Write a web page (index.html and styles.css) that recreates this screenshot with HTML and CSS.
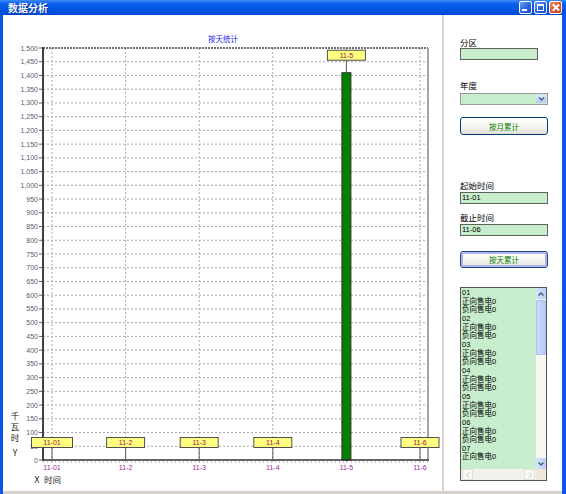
FILE: index.html
```html
<!DOCTYPE html>
<html lang="zh-CN">
<head>
    <meta charset="UTF-8">
    <title>数据分析</title>
    <link rel="stylesheet" href="styles.css">
</head>
<body>
    <div class="window">
        <div class="titlebar">
            <span class="title">数据分析</span>
            <div class="controls">
                <span class="tb min"></span>
                <span class="tb max"></span>
                <span class="tb close"></span>
            </div>
        </div>

        <div class="content">
            <div class="chart">
                <svg id="chart" width="439" height="476" viewBox="3 15 439 476"></svg>
            </div>

            <div class="side">
                <label class="field-label">分区</label>
                <div class="textbox short"></div>

                <label class="field-label gap-year">年度</label>
                <div class="combo">
                    <span class="combo-btn">
                        <svg width="9" height="8" viewBox="0 0 9 8"><path d="M2 2.5 L4.5 5 L7 2.5" fill="none" stroke="#4d6185" stroke-width="1.5"/></svg>
                    </span>
                </div>

                <button class="btn btn-month">按月累计</button>

                <label class="field-label gap-start">起始时间</label>
                <div class="textbox">11-01</div>

                <label class="field-label gap-end">截止时间</label>
                <div class="textbox">11-06</div>

                <button class="btn btn-day">按天累计</button>

                <div class="list">
                    <div class="items" id="items"></div>
                    <div class="vscroll">
                        <span class="sb-btn"><svg width="8" height="6" viewBox="0 0 8 6"><path d="M1.5 4.5 L4 2 L6.5 4.5" fill="none" stroke="#4d6185" stroke-width="1.5"/></svg></span>
                        <span class="sb-track"><span class="sb-thumb"></span></span>
                        <span class="sb-btn"><svg width="8" height="6" viewBox="0 0 8 6"><path d="M1.5 1.5 L4 4 L6.5 1.5" fill="none" stroke="#4d6185" stroke-width="1.5"/></svg></span>
                    </div>
                    <div class="hscroll">
                        <span class="hs-btn"><svg width="6" height="8" viewBox="0 0 6 8"><path d="M4 1.5 L1.5 4 L4 6.5" fill="none" stroke="#c4c4bc" stroke-width="1"/></svg></span>
                        <span class="hs-btn"><svg width="6" height="8" viewBox="0 0 6 8"><path d="M2 1.5 L4.5 4 L2 6.5" fill="none" stroke="#c4c4bc" stroke-width="1"/></svg></span>
                    </div>
                    <div class="corner"></div>
                </div>
            </div>
        </div>
    </div>

    <script>
        const days = ['11-01', '11-2', '11-3', '11-4', '11-5', '11-6'];
        const values = [0, 0, 0, 0, 1410, 0];
        const plot = { left: 43, right: 428, top: 48, bottom: 460, max: 1500 };
        const svg = document.getElementById('chart');
        const NS = 'http://www.w3.org/2000/svg';

        function add(tag, attrs, text) {
            const el = document.createElementNS(NS, tag);
            for (const k in attrs) el.setAttribute(k, attrs[k]);
            if (text !== undefined) el.textContent = text;
            svg.appendChild(el);
            return el;
        }

        function yOf(v) {
            return plot.bottom - v * (plot.bottom - plot.top) / plot.max;
        }

        function xOf(i) {
            return 52 + i * 73.6;
        }

        function fmt(v) {
            if (v < 1000) return String(v);
            return Math.floor(v / 1000) + ',' + String(v % 1000).padStart(3, '0');
        }

        // title
        add('text', { x: 223, y: 42, class: 'chart-title' }, '按天统计');

        // horizontal grid + y labels
        for (let v = 0; v <= plot.max; v += 50) {
            const y = yOf(v);
            if (v > 0 && v < plot.max) {
                add('line', { x1: plot.left, y1: y, x2: plot.right, y2: y, class: 'grid' });
            }
            add('line', { x1: 39, y1: y, x2: plot.left, y2: y, class: 'tick' });
            add('text', { x: 38, y: y + 2.5, class: 'ylabel' }, fmt(v));
        }

        // vertical grid + x labels
        days.forEach((d, i) => {
            const x = xOf(i);
            add('line', { x1: x, y1: plot.top, x2: x, y2: plot.bottom + 4, class: 'grid' });
            add('text', { x: x, y: 470, class: 'xlabel' }, d);
        });

        // bars
        values.forEach((v, i) => {
            if (v <= 0) return;
            const y = yOf(v);
            add('rect', { x: xOf(i) - 4.5, y: y, width: 9, height: plot.bottom - y, class: 'bar' });
        });

        // frame
        add('line', { x1: plot.left, y1: plot.top, x2: plot.right, y2: plot.top, class: 'frame-top' });
        add('line', { x1: plot.right, y1: plot.top, x2: plot.right, y2: plot.bottom, class: 'frame-right' });
        add('line', { x1: plot.left, y1: plot.bottom + 2, x2: plot.right, y2: plot.bottom + 2, class: 'minor' });
        add('line', { x1: plot.left, y1: plot.bottom, x2: plot.right + 1, y2: plot.bottom, class: 'axis-x' });
        add('line', { x1: plot.left, y1: plot.top - 1, x2: plot.left, y2: plot.bottom + 1, class: 'axis-y' });

        // value labels
        values.forEach((v, i) => {
            const x = xOf(i);
            const py = v > 0 ? yOf(v) : plot.bottom;
            const boxBottom = py - 12.5;
            add('line', { x1: x, y1: boxBottom, x2: x, y2: py, class: 'pointer' });
            const box = add('rect', { x: x, y: boxBottom - 10, width: 0, height: 10, class: 'tag' });
            const t = add('text', { x: x, y: boxBottom - 2.5, class: 'tag-text' }, days[i]);
            const w = Math.round(t.getComputedTextLength()) + 24;
            box.setAttribute('x', x - w / 2);
            box.setAttribute('width', w);
        });

        // axis titles
        ['千', '瓦', '时'].forEach((c, i) => {
            add('text', { x: 15, y: 419 + i * 11, class: 'axis-title' }, c);
        });
        add('text', { x: 15, y: 456, class: 'axis-title' }, 'Y');
        add('text', { x: 37, y: 483, class: 'axis-title' }, 'X');
        add('text', { x: 44, y: 483, class: 'axis-title start' }, '时间');

        // list box: only whole rows are shown, like a Win32 listbox
        const items = document.getElementById('items');
        const rows = [];
        for (let n = 1; n <= 7; n++) {
            rows.push('0' + n, '正向售电0', '负向售电0');
        }
        rows.slice(0, 20).forEach(line => {
            const row = document.createElement('div');
            row.className = 'item';
            row.textContent = line;
            items.appendChild(row);
        });
    </script>
</body>
</html>
```

FILE: styles.css
```css
body {
    margin: 0;
    font-family: "Noto Sans CJK SC", "Liberation Sans", sans-serif;
    background: #fff;
}

.window {
    width: 566px;
    height: 494px;
    display: flex;
    flex-direction: column;
    background: #0b55e6;
    overflow: hidden;
}

.titlebar {
    height: 15px;
    display: flex;
    align-items: center;
    justify-content: space-between;
    padding: 0 4px 0 8px;
    background: linear-gradient(to bottom, #3d8cf7 0%, #0b5fe9 25%, #0055e5 65%, #0049d3 100%);
}

.title {
    color: #fff;
    font-size: 10px;
    font-weight: bold;
    line-height: 15px;
    text-shadow: 1px 1px 0 #0a2f9a;
}

.controls {
    display: flex;
    gap: 2px;
}

.tb {
    position: relative;
    width: 13px;
    height: 13px;
    box-sizing: border-box;
    border: 1px solid #fff;
    border-radius: 2px;
    background: linear-gradient(135deg, #6e9cf7 0%, #2a62e0 55%, #1a4fd0 100%);
}

.min::after {
    content: '';
    position: absolute;
    left: 2px;
    bottom: 2px;
    width: 5px;
    height: 2px;
    background: #fff;
}

.max::after {
    content: '';
    position: absolute;
    left: 2px;
    top: 2px;
    width: 7px;
    height: 7px;
    box-sizing: border-box;
    border: 1px solid #fff;
    border-top-width: 2px;
}

.close {
    background: linear-gradient(135deg, #f09070 0%, #e0542e 55%, #c8401a 100%);
}

.close::before,
.close::after {
    content: '';
    position: absolute;
    left: 5px;
    top: 1px;
    width: 1.6px;
    height: 9px;
    background: #fff;
    transform: rotate(45deg);
}

.close::after {
    transform: rotate(-45deg);
}

.content {
    flex: 1;
    display: flex;
    margin: 0 4px 0 3px;
    background: #fff;
    border-bottom: 3px solid #d6d3ce;
}

.chart {
    width: 439px;
    border-right: 2px solid #d6d3ce;
}

.chart svg {
    display: block;
}

/* chart parts */
.chart-title {
    font-size: 7.5px;
    fill: #1c1cf0;
    text-anchor: middle;
}

.grid {
    stroke: #a8a8a8;
    stroke-width: 1;
    stroke-dasharray: 2 2;
}

.tick {
    stroke: #606060;
    stroke-width: 1;
}

.ylabel {
    font-family: "Liberation Sans", sans-serif;
    font-size: 7px;
    fill: #5c5a78;
    text-anchor: end;
}

.xlabel {
    font-family: "Liberation Sans", sans-serif;
    font-size: 7px;
    fill: #9a2a9a;
    text-anchor: middle;
}

.bar {
    fill: #008000;
    stroke: #303030;
    stroke-width: 1;
}

.frame-top {
    stroke: #404040;
    stroke-width: 1.5;
    stroke-dasharray: 2 1;
}

.frame-right {
    stroke: #8a8a8a;
    stroke-width: 1.5;
}

.minor {
    stroke: #909090;
    stroke-width: 1;
    stroke-dasharray: 1 3;
}

.axis-x {
    stroke: #303030;
    stroke-width: 1.5;
}

.axis-y {
    stroke: #404040;
    stroke-width: 2;
}

.pointer {
    stroke: #606060;
    stroke-width: 1;
}

.tag {
    fill: #ffff80;
    stroke: #505050;
    stroke-width: 1;
}

.tag-text {
    font-family: "Liberation Sans", sans-serif;
    font-size: 7px;
    fill: #a01040;
    text-anchor: middle;
}

.axis-title {
    font-size: 8.5px;
    fill: #202020;
    text-anchor: middle;
}

.axis-title.start {
    text-anchor: start;
}

/* side panel */
.side {
    flex: 1;
    display: flex;
    flex-direction: column;
    align-items: flex-start;
    padding: 21px 0 0 16px;
}

.field-label {
    display: block;
    height: 12px;
    line-height: 12px;
    font-size: 8.5px;
    color: #000;
}

.gap-year {
    margin-top: 19px;
}

.gap-start {
    margin-top: 44px;
}

.gap-end {
    margin-top: 7px;
}

.textbox {
    width: 88px;
    height: 12px;
    box-sizing: border-box;
    margin-top: 1px;
    padding-left: 1px;
    border: 1px solid #606060;
    background: #c7edcc;
    font-family: "Liberation Sans", sans-serif;
    font-size: 7.5px;
    line-height: 10px;
    color: #000;
}

.textbox.short {
    width: 78px;
    margin-top: 0;
}

.combo {
    width: 88px;
    height: 12px;
    box-sizing: border-box;
    margin-top: 2px;
    border: 1px solid #9a9a9a;
    background: #c7edcc;
    display: flex;
    justify-content: flex-end;
    padding: 1px;
}

.combo-btn {
    width: 10px;
    height: 8px;
    border-radius: 1px;
    background: linear-gradient(#dbe5fb, #b4c8f6);
    display: flex;
    align-items: center;
    justify-content: center;
}

.btn {
    width: 88px;
    height: 18px;
    padding: 0;
    border: 1px solid #003c74;
    border-radius: 3px;
    background: linear-gradient(#ffffff 0%, #f4f3ee 60%, #e2dfd6 100%);
    font-family: "Noto Sans CJK SC", sans-serif;
    font-size: 7.5px;
    color: #008000;
}

.btn-month {
    margin-top: 12px;
}

.btn-day {
    margin-top: 15px;
    height: 17px;
    border-color: #2a3f8a;
    box-shadow: inset 0 0 0 2px #aab6e8;
}

.list {
    margin-top: 19px;
    width: 87px;
    height: 194px;
    box-sizing: border-box;
    border: 1px solid #555;
    display: grid;
    grid-template-columns: 1fr 10px;
    grid-template-rows: 1fr 11px;
    background: #c7edcc;
}

.items {
    overflow: hidden;
    padding: 1px 0 0 1px;
}

.item {
    height: 8.67px;
    line-height: 8.67px;
    font-family: "Liberation Sans", "Noto Sans CJK SC", sans-serif;
    font-size: 7.5px;
    color: #000;
    white-space: nowrap;
}

.vscroll {
    display: flex;
    flex-direction: column;
    background: #f7f7f3;
}

.sb-btn {
    height: 11px;
    border-radius: 1px;
    background: linear-gradient(to right, #d6e2fc, #b9cdf7);
    display: flex;
    align-items: center;
    justify-content: center;
}

.sb-track {
    flex: 1;
    padding-top: 1px;
}

.sb-thumb {
    display: block;
    height: 55px;
    box-sizing: border-box;
    border: 1px solid #a8bff0;
    border-radius: 1px;
    background: linear-gradient(to right, #cbdafc, #b6cbf7);
}

.hscroll {
    display: flex;
    justify-content: space-between;
    background: #f2f2ec;
    padding: 0 1px;
}

.hs-btn {
    width: 11px;
    height: 11px;
    box-sizing: border-box;
    border: 1px solid #e2e2da;
    background: #f8f8f4;
    display: flex;
    align-items: center;
    justify-content: center;
}

.corner {
    background: #ece9d8;
}
```
